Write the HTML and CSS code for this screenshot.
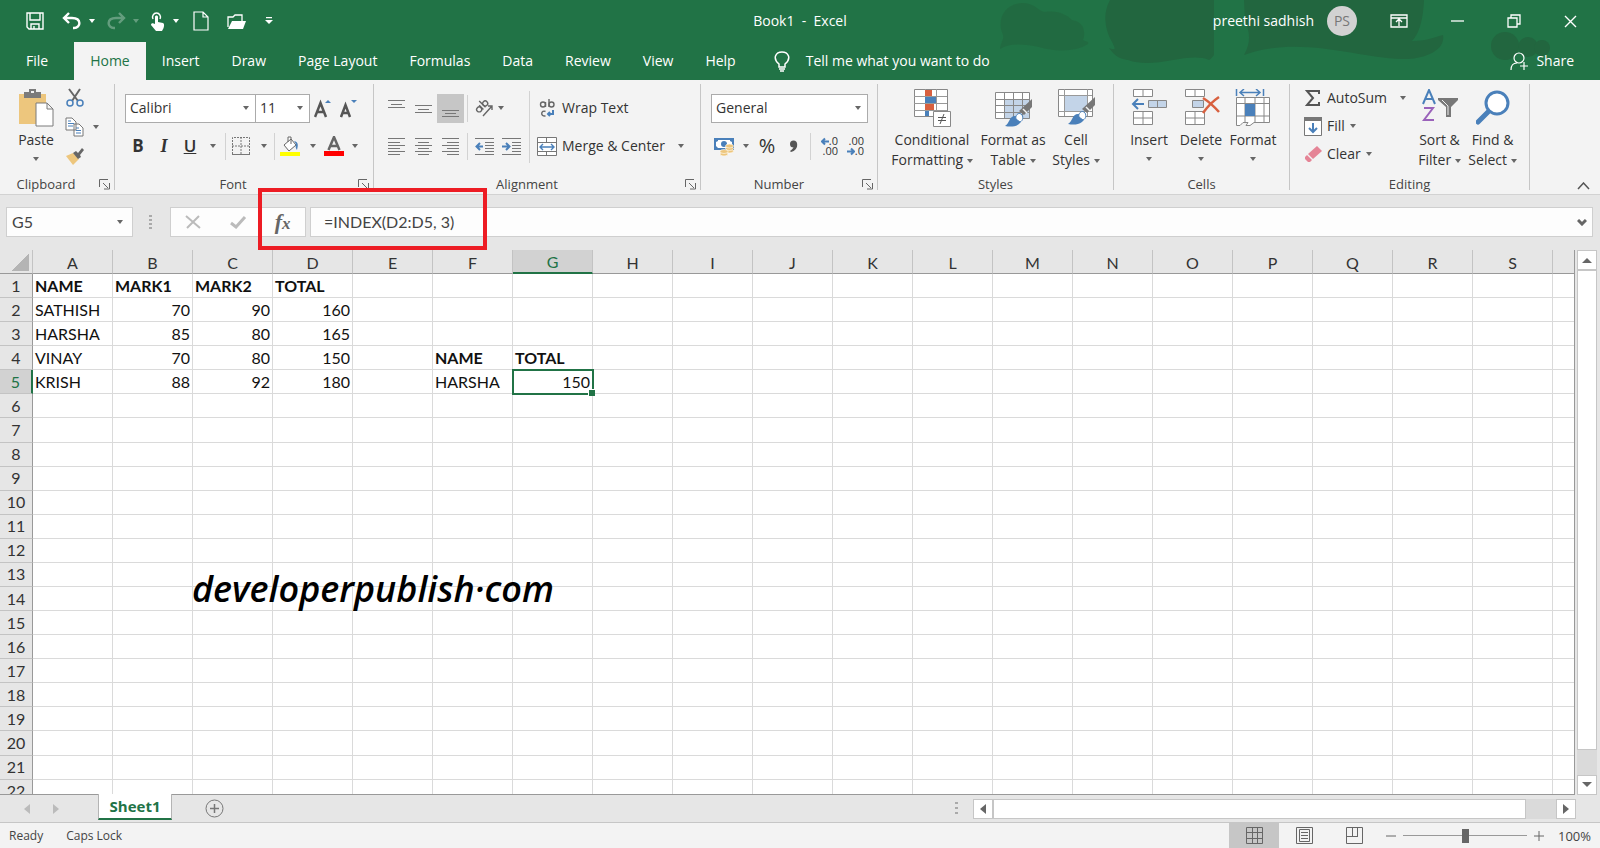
FILE: index.html
```html
<!DOCTYPE html>
<html lang="en">
<head>
<meta charset="utf-8">
<title>Book1 - Excel</title>
<link rel="stylesheet" href="styles.css">
</head>
<body>
<div class="app">
  <header class="top">
    <svg class="art" width="660" height="80" viewBox="0 0 660 80" aria-hidden="true">
      <g fill="#22663f">
        <path d="M60 49c1-8 4-9 3-14-7-16 2-32 20-32 12 0 16 9 22 9 13-2 22 3 27 8 12 2 14 12 11 20 3 2 6 1 5 4-12 8-33 8-49 3-14-3-30-4-39 2z" opacity=".7"/>
        <path d="M170 0h104v55c-2 3-5 5-5 5-20-9-54 10-81 0-12-2-14-6-19-12 8 3 6 0 3-6-8-14-9-30-2-42z"/>
        <path d="M304 0h180c-1 23-6 35-12 41 13 0 20-3 31-6 3 17-23 25-42 24-44-1-101-24-157-4 8-14 5-25 1-34z"/>
        <circle cx="565" cy="46" r="14"/><circle cx="588" cy="47" r="10"/><circle cx="602" cy="48" r="8"/>
      </g>
    </svg>
    <div class="titlebar">
      <nav class="quick" aria-label="Quick access">
        <button aria-label="Save"><svg width="18" height="18" fill="none" stroke="#fff" stroke-width="1.4"><path d="M1 1h16v16H3l-2-2zM4 1v7h10V1M5 17v-5h8v5M8 17v-3"/></svg></button>
        <button aria-label="Undo"><svg width="20" height="18" fill="none" stroke="#fff" stroke-width="2.4"><path d="M7 1L2 6l5 5M2 6h8c10 0 9 10 2 10h-1"/></svg></button><i class="caret light"></i>
        <button class="dim" aria-label="Redo"><svg width="20" height="18" fill="none" stroke="#fff" stroke-width="2.4"><path d="M13 1l5 5-5 5M18 6h-8c-10 0-9 10-2 10h1"/></svg></button><i class="caret light dim"></i>
        <button aria-label="Touch mode"><svg width="16" height="19"><path d="M3 7a4 4 0 1 1 7 0" fill="none" stroke="#fff" stroke-width="1.5"/><path d="M5 5c0-2 3-2 3 0v5l5 1c2 1 1 5-1 8H6l-5-6c0-2 2-2 4-1z" fill="#fff"/></svg></button><i class="caret light"></i>
        <button class="new" aria-label="New"><svg width="16" height="20" fill="none" stroke="#fff" stroke-width="1.2"><path d="M1 1h9l5 5v13H1zM10 1v5h5"/></svg></button>
        <button aria-label="Open"><svg width="20" height="17"><path d="M1 14V4h5l2-2h7v6" fill="none" stroke="#fff" stroke-width="1.300"/><path d="M5 8h14l-3 8H1z" fill="#fff"/></svg></button>
        <button aria-label="Customize"><svg width="8" height="8" fill="#fff"><path d="M1 0h6v1.300H1zM0 3h8L4 7z"/></svg></button>
      </nav>
      <h1 class="title">Book1&nbsp; -&nbsp; Excel</h1>
      <div class="window">
        <span>preethi sadhish</span><span class="avatar">PS</span>
        <button aria-label="Ribbon display options"><svg width="18" height="14" fill="none" stroke="#fff" stroke-width="1.3"><path d="M1 1h16v12H1zM1 4h16M9 12V6M6 8l3-3 3 3"/></svg></button>
        <button aria-label="Minimize"><svg width="13" height="14" stroke="#fff" stroke-width="1.300"><path d="M0 7h13"/></svg></button>
        <button aria-label="Restore"><svg width="14" height="14" fill="none" stroke="#fff" stroke-width="1.300"><path d="M1 4h9v9H1zM4 4V1h9v9h-3"/></svg></button>
        <button aria-label="Close"><svg width="13" height="13" stroke="#fff" stroke-width="1.4"><path d="M1 1l11 11M12 1L1 12"/></svg></button>
      </div>
    </div>
    <nav class="tabs" aria-label="Ribbon tabs">
      <button class="file">File</button><button class="active">Home</button><button>Insert</button><button>Draw</button><button>Page Layout</button><button>Formulas</button><button>Data</button><button>Review</button><button>View</button><button>Help</button>
      <button class="tell"><svg width="16" height="21" fill="none" stroke="#fff" stroke-width="1.500"><path d="M5 16v-3C-2 7 2 1 8 1s10 6 3 12v3zM5 18h6M6 20h4"/></svg>Tell me what you want to do</button>
      <button class="share"><svg width="18" height="19" fill="none" stroke="#fff" stroke-width="1.200"><circle cx="9" cy="6" r="5"/><path d="M1 18c0-5 3-7 6-7M14 10v8M10 14h8"/></svg>Share</button>
    </nav>
  </header>

  <section class="ribbon" aria-label="Home ribbon">
    <div class="group clipboard">
      <div class="body">
        <button class="big"><svg width="36" height="39"><path d="M1 5h27v30H1z" fill="#edc67d"/><path d="M6 3h5V0h7v3h5v6H6z" fill="#7b7b7b"/><path d="M13 2h3v2h-3z" fill="#f3f3f3"/><path d="M18 14h11l6 6v17H18zM29 14v6h6" fill="#fff" stroke="#7b7b7b"/></svg><span>Paste</span><i class="caret"></i></button>
        <div class="stack">
          <button aria-label="Cut"><svg width="18" height="19" fill="none" stroke-width="2"><path d="M3 1l9 12M14 1L6 13" stroke="#666"/><g stroke="#4a80ba" stroke-width="1.500"><circle cx="4" cy="15" r="3"/><circle cx="14" cy="15" r="3"/></g></svg></button>
          <button aria-label="Copy"><svg width="19" height="20" fill="#fff" stroke="#777"><path d="M1 1h6l4 4v8H1zM9 7h5l4 4v8H9z"/><path d="M3 4h3M3 6.500h6M3 9h5M11 11h3M11 13.500h5M11 16h5" stroke="#4a80ba"/></svg></button>
          <button aria-label="Format Painter"><svg width="19" height="18"><path d="M1 9l7-3 6 6-6 6z" fill="#edc67d"/><path d="M8 6l3-2 2 2 4-5 2 2-4 5 1 2-3 2z" fill="#666"/></svg></button>
        </div>
        <i class="caret"></i>
      </div>
      <footer><span>Clipboard</span><svg class="launch" width="11" height="11"><use href="#launch"/></svg></footer>
    </div>

    <div class="group font">
      <div class="body rows">
        <div class="row">
          <select class="face" aria-label="Font"><option>Calibri</option></select><select class="size" aria-label="Font size"><option>11</option></select>
          <button class="tool grow" aria-label="Increase font size"><svg width="18" height="19"><path d="M1 18L6.500 4L12 18M3 13h7" stroke="#555" stroke-width="2.500" fill="none"/><path d="M11 4h6l-3-3z" fill="#4a80ba"/></svg></button>
          <button class="tool" aria-label="Decrease font size"><svg width="18" height="19"><path d="M1 18L5.500 6L10 18M3 14h5" stroke="#555" stroke-width="2.500" fill="none"/><path d="M11 1h6l-3 3z" fill="#4a80ba"/></svg></button>
        </div>
        <div class="row">
          <button class="tool letter bold">B</button><button class="tool letter italic">I</button><button class="tool letter under">U</button><i class="caret"></i><i class="sep"></i>
          <button class="tool wide" aria-label="Borders"><svg width="18" height="18" fill="none" stroke="#777"><path d="M.5 17V.5h17V17M9 0v17M0 9h18" stroke-dasharray="2 1"/><path d="M0 17.500h18"/></svg></button><i class="caret"></i><i class="sep"></i>
          <button class="tool wide" aria-label="Fill color"><svg width="20" height="20"><path d="M4 9l7-6 5 6-7 6zM8 6V1h3v7" fill="#fff" stroke="#666"/><path d="M14 5c5 1 4 5 3 9-1-1-2-4-1-6z" fill="#4a80ba"/><path d="M0 16h20v4H0z" fill="#ff0"/></svg></button><i class="caret"></i>
          <button class="tool wide ink" aria-label="Font color"><svg width="20" height="20"><path d="M4.500 14L10 1L15.500 14M6 10h8" fill="none" stroke="#666" stroke-width="2.500"/><path d="M0 15h20v5H0z" fill="red"/></svg></button><i class="caret"></i>
        </div>
      </div>
      <footer><span>Font</span><svg class="launch" width="11" height="11"><use href="#launch"/></svg></footer>
    </div>

    <div class="group align">
      <div class="body">
        <div class="rows">
          <div class="row">
            <button class="tool" aria-label="Top align"><svg class="lines" width="17" height="19"><path d="M0 1.500h17M3 5.500h11M0 8.500h17"/></svg></button>
            <button class="tool" aria-label="Middle align"><svg class="lines" width="17" height="19"><path d="M0 6.500h17M3 10.500h11M0 13.500h17"/></svg></button>
            <button class="tool on" aria-label="Bottom align"><svg class="lines" width="17" height="19"><path d="M0 11.500h17M3 14.500h11M0 17.500h17"/></svg></button>
            <i class="sep"></i>
            <button class="tool" aria-label="Orientation"><svg width="19" height="18" fill="none" stroke="#666" stroke-width="1.400"><g transform="rotate(-45 7 9)"><circle cx="4" cy="8" r="2.500"/><path d="M7 5v6M10 2v9"/><circle cx="12.500" cy="8" r="2.500"/></g><path d="M8 17L17 7M13 7h4v4"/></svg></button><i class="caret"></i>
          </div>
          <div class="row">
            <button class="tool" aria-label="Align left"><svg class="lines" width="17" height="19"><path d="M0 1.500h17M0 5.500h12M0 8.500h17M0 11.500h12M0 14.500h17M0 17.500h12"/></svg></button>
            <button class="tool" aria-label="Center"><svg class="lines" width="17" height="19"><path d="M0 1.500h17M3 5.500h11M0 8.500h17M3 11.500h11M0 14.500h17M3 17.500h11"/></svg></button>
            <button class="tool" aria-label="Align right"><svg class="lines" width="17" height="19"><path d="M0 1.500h17M5 5.500h12M0 8.500h17M5 11.500h12M0 14.500h17M5 17.500h12"/></svg></button>
            <i class="sep"></i>
            <button class="tool" aria-label="Decrease indent"><svg class="lines" width="19" height="19"><path d="M0 1.500h19M10 5.500h9M10 8.500h9M10 11.500h9M10 14.500h9M0 17.500h19"/><path class="blue" d="M8 9.500H1M5 6L1.500 9.500 5 13"/></svg></button>
            <button class="tool" aria-label="Increase indent"><svg class="lines" width="19" height="19"><path d="M0 1.500h19M10 5.500h9M10 8.500h9M10 11.500h9M10 14.500h9M0 17.500h19"/><path class="blue" d="M0 9.500h7M4 6l3.500 3.500L4 13"/></svg></button>
          </div>
        </div>
        <i class="sep tall"></i>
        <div class="rows">
          <button class="label row"><svg width="20" height="19" fill="none" stroke="#666" stroke-width="1.400"><circle cx="6" cy="5.500" r="2.500"/><path d="M8.500 3v5M12 0v8M8.500 12.500c-4-2-6 5-0 4.500"/><circle cx="14.500" cy="5.500" r="2.500"/><path class="blue" d="M16 11v4h-5M13 13l-2 2 2 2"/></svg>Wrap Text</button>
          <button class="label row"><svg width="20" height="19" fill="#fff" stroke="#777"><path d="M.5.500h19v18H.5zM.5 5.500h19M.5 14.500h19M9.500.500v5M9.500 14.500v4"/><path d="M3 10h14M6 7l-3 3 3 3M14 7l3 3-3 3" fill="none" stroke="#4a80ba" stroke-width="1.400"/></svg>Merge &amp; Center<i class="caret"></i></button>
        </div>
      </div>
      <footer><span>Alignment</span><svg class="launch" width="11" height="11"><use href="#launch"/></svg></footer>
    </div>

    <div class="group number">
      <div class="body rows">
        <div class="row"><select class="format" aria-label="Number format"><option>General</option></select></div>
        <div class="row">
          <button class="tool" aria-label="Accounting format"><svg width="20" height="19"><path d="M0 1h20v12H0z" fill="#4a80ba"/><path d="M4 3h12v1l2 1v4l-2 2H4L2 9V5l2-1z" fill="#fff"/><circle cx="10" cy="7" r="3" fill="#4a80ba"/><g fill="#edc67d" stroke="#fff" stroke-width=".6"><ellipse cx="15.500" cy="14" rx="4" ry="2"/><ellipse cx="15.500" cy="11.500" rx="4" ry="2"/><ellipse cx="15.500" cy="9" rx="4" ry="2"/><ellipse cx="10" cy="17" rx="4" ry="2"/><ellipse cx="10" cy="14.500" rx="4" ry="2"/></g></svg></button><i class="caret"></i>
          <button class="tool percent">%</button>
          <button class="tool" aria-label="Comma style"><svg width="9" height="13"><circle cx="4.500" cy="4" r="3.500" fill="#555"/><path d="M8 3c1 5-2 8-6 9l-1-1c3-2 4-4 4-6z" fill="#555"/></svg></button>
          <i class="sep"></i>
          <button class="tool dec" aria-label="Increase decimal"><span><svg width="8" height="9"><path class="blue" d="M8 4.500H1M4 1.500L1 4.500l3 3"/></svg>.0</span><span>.00</span></button>
          <button class="tool dec" aria-label="Decrease decimal"><span>.00</span><span><svg width="8" height="9"><path class="blue" d="M0 4.500h7M4 1.500l3 3-3 3"/></svg>.0</span></button>
        </div>
      </div>
      <footer><span>Number</span><svg class="launch" width="11" height="11"><use href="#launch"/></svg></footer>
    </div>

    <div class="group styles">
      <div class="body">
        <button class="big"><svg width="37" height="39"><path d="M.5.500h33v27H.5z" fill="#fff" stroke="#888"/><path d="M11.500 0v27M22.500 0v27M0 7.500h33M0 14.500h33M0 21.500h33" stroke="#999"/><path d="M11 1h7v6h-7zM11 15h9v6h-9z" fill="#d8603f"/><path d="M11 8h11v6H11zM11 22h4v5h-4z" fill="#4a80ba"/><path d="M19.500 22.500h17v15h-17z" fill="#fff" stroke="#888"/><path d="M24 28.500h8M24 31.500h8M30 25l-4 10" stroke="#555"/></svg><span>Conditional<br>Formatting <i class="caret"></i></span></button>
        <button class="big"><svg width="37" height="39"><path d="M.5 3.500h34v26H.5z" fill="#fff"/><path d="M9 10h26v20H9z" fill="#c3d4e8"/><path d="M.5 3.500h34v26H.5zM9.500 3v26M18.500 3v26M27.500 3v26M0 10.500h34M0 16.500h34M0 23.500h34" fill="none" stroke="#888"/><use href="#brush"/></svg><span>Format as<br>Table <i class="caret"></i></span></button>
        <button class="big"><svg width="37" height="39"><path d="M.5.500h34v27H.5z" fill="#fff" stroke="#888"/><path d="M7 7h22v15H7z" fill="#c3d4e8"/><path d="M6.500 0v27M29.500 0v27M0 6.500h34M0 22.500h34" stroke="#999"/><use href="#brush" y="-2"/></svg><span>Cell<br>Styles <i class="caret"></i></span></button>
      </div>
      <footer><span>Styles</span></footer>
    </div>

    <div class="group cells">
      <div class="body">
        <button class="big"><svg width="37" height="39" fill="#fff" stroke="#888"><path d="M2.500.500h19v7h-19zM12 0v7M2.500 22.500h19v13h-19zM12 22v13M2 29h19"/><path d="M17.500 11.500h18v7h-18zM26.500 11v8" fill="#c3d4e8"/><path class="blue" d="M13 15H2M7 10l-5 5 5 5"/></svg><span>Insert</span><i class="caret"></i></button>
        <button class="big"><svg width="37" height="39" fill="#fff" stroke="#888"><path d="M2.500.500h19v7h-19zM12 0v7M2.500 22.500h19v13h-19zM12 22v13M2 29h19"/><path d="M9.500 11.500h11v7h-11z" fill="#c3d4e8"/><path d="M20 9q8 5 16 14M36 8q-9 6-16 16" fill="none" stroke="#d8603f" stroke-width="2.500"/></svg><span>Delete</span><i class="caret"></i></button>
        <button class="big"><svg width="37" height="39" fill="#fff" stroke="#888"><path d="M1.500 8.500h33v25H19l-4 3h-4l2-3H8l-3 3H1.500zM10 8v25M20 8v25M29 8v25M1 14.500h33M1 27h33"/><path d="M10 15h10v12H10z" fill="#4a80ba" stroke="none"/><path d="M1.500 0v7M28.500 0v7M5 3.500h20M9 0L5 3.500 9 7M21 0l4 3.500L21 7" fill="none" stroke="#4a80ba" stroke-width="1.500"/></svg><span>Format</span><i class="caret"></i></button>
      </div>
      <footer><span>Cells</span></footer>
    </div>

    <div class="group editing">
      <div class="body">
        <div class="edits">
          <button class="label"><svg width="18" height="18"><path d="M15 5V2H3l6 7-6 7h12v-3" fill="none" stroke="#555" stroke-width="2"/></svg>AutoSum<i class="caret far"></i></button>
          <button class="label"><svg width="18" height="19"><path d="M.5 1.500h17v17H.5z" fill="#fff" stroke="#777"/><path d="M0 0h18v4H0z" fill="#777"/><path class="blue" d="M9 6v9M5 11l4 4 4-4"/></svg>Fill<i class="caret"></i></button>
          <button class="label"><svg width="18" height="17"><path d="M13 0l5 5-9 8-5-5z" fill="#e58496"/><path d="M3 9l5 5-2 2H4l-3-3v-2z" fill="#e58496"/></svg>Clear<i class="caret"></i></button>
        </div>
        <button class="big"><svg width="36" height="38"><path d="M1 15L7 1L13 15M3 10h8" fill="none" stroke="#4a80ba" stroke-width="2"/><path d="M2 19h9L2 31h10" fill="none" stroke="#9a62ba" stroke-width="2"/><path d="M16 9h20v2l-7 7v10h-5V18l-8-7z" fill="#777"/><path d="M20 11l6 6v9" fill="none" stroke="#eee"/></svg><span>Sort &amp;<br>Filter <i class="caret"></i></span></button>
        <button class="big"><svg width="34" height="38"><path d="M2 33L13 22" stroke="#4a80ba" stroke-width="5" stroke-linecap="round"/><circle cx="21" cy="14" r="11" fill="#fff" stroke="#4a80ba" stroke-width="3"/></svg><span>Find &amp;<br>Select <i class="caret"></i></span></button>
      </div>
      <footer><span>Editing</span></footer>
    </div>
    <button class="collapse" aria-label="Collapse ribbon"><svg width="13" height="8" fill="none" stroke="#555" stroke-width="1.500"><path d="M1 7l5.500-6L12 7"/></svg></button>
  </section>

  <section class="formula" aria-label="Formula bar">
    <label class="namebox"><input aria-label="Name box" value="G5"><i class="caret"></i></label>
    <svg class="dots" width="3" height="14" fill="#aaa"><path d="M0 0h3v2H0zM0 4h3v2H0zM0 8h3v2H0zM0 12h3v2H0z"/></svg>
    <div class="entry">
      <button aria-label="Cancel"><svg width="16" height="14" stroke="#bbb" stroke-width="2"><path d="M1 1l14 12M14 1L2 13"/></svg></button>
      <button aria-label="Enter"><svg width="17" height="13" fill="none" stroke="#bbb" stroke-width="3"><path d="M1 7l5 4L15 1"/></svg></button>
      <button class="fx" aria-label="Insert function">f<sub>x</sub></button>
    </div>
    <label class="fbox"><input aria-label="Formula" value="=INDEX(D2:D5, 3)"><svg width="10" height="7" fill="none" stroke="#666" stroke-width="3"><path d="M1 1l4 4 4-4"/></svg></label>
    <div class="callout"></div>
  </section>

  <main class="work">
    <div class="gridbox">
      <table class="grid"><thead id="head"></thead><tbody id="rows"></tbody></table>
      <p class="mark">developerpublish·com</p>
    </div>
    <div class="vscroll">
      <button aria-label="Scroll up"><svg width="10" height="6" fill="#666"><path d="M0 6l5-5 5 5z"/></svg></button>
      <div class="thumb"></div>
      <div class="track"></div>
      <button aria-label="Scroll down"><svg width="10" height="6" fill="#666"><path d="M0 0l5 5 5-5z"/></svg></button>
    </div>
  </main>

  <div class="sheets">
    <button class="nav" aria-label="Previous sheet"><svg width="6" height="10" fill="#bbb"><path d="M6 0L0 5l6 5z"/></svg></button>
    <button class="nav" aria-label="Next sheet"><svg width="6" height="10" fill="#bbb"><path d="M0 0l6 5-6 5z"/></svg></button>
    <button class="sheet">Sheet1</button>
    <button class="add" aria-label="New sheet"><svg width="19" height="19" fill="none" stroke="#777"><circle cx="9.500" cy="9.500" r="8.500"/><path d="M9.500 5v9M5 9.500h9" stroke-width="1.500"/></svg></button>
    <svg class="dots" width="3" height="14" fill="#aaa"><path d="M0 0h3v2H0zM0 5h3v2H0zM0 10h3v2H0z"/></svg>
    <div class="hscroll">
      <button aria-label="Scroll left"><svg width="6" height="10" fill="#666"><path d="M6 0L0 5l6 5z"/></svg></button>
      <div class="thumb"></div>
      <div class="track"></div>
      <button aria-label="Scroll right"><svg width="6" height="10" fill="#666"><path d="M0 0l6 5-6 5z"/></svg></button>
    </div>
  </div>

  <footer class="status">
    <span>Ready</span><span>Caps Lock</span>
    <div class="views">
      <button class="on" aria-label="Normal view"><svg width="17" height="17"><path d="M.5.500h16v16H.5zM6.500 0v16M11.500 0v16M0 5.500h16M0 11.500h16"/></svg></button>
      <button aria-label="Page layout view"><svg width="17" height="17"><path d="M.5.500h16v16H.5zM3.500 2.500h10v12h-10zM5 5.500h7M5 8.500h7M5 11.500h7"/></svg></button>
      <button aria-label="Page break view"><svg width="17" height="17"><path d="M.5.500h16v16H.5zM6.500 0v9M11.500 0v9M0 9.500h12"/></svg></button>
    </div>
    <button class="zoom" aria-label="Zoom out"><svg width="10" height="10"><path d="M0 5h10"/></svg></button>
    <input type="range" min="10" max="190" value="100" aria-label="Zoom">
    <button class="zoom" aria-label="Zoom in"><svg width="10" height="10"><path d="M0 5h10M5 0v10"/></svg></button>
    <output>100%</output>
  </footer>
</div>

<svg class="defs" aria-hidden="true">
  <defs>
    <g id="launch" fill="none" stroke="#666"><path d="M.5 8V.500H9M4 4l5 5M10.500 4v6H5"/></g>
    <g id="brush" stroke="none"><path d="M37 10v8l-8 8-5-4z" fill="#777"/><path d="M28 20l4 4" stroke="#f3f3f3" stroke-width="1.500"/><path d="M10 37c5-3 4-10 10-10s8 5 4 8-9 3-14 2z" fill="#4a80ba"/><path d="M21 30c-1-3 2-7 5-5s2 7-1 8z" fill="#fff" stroke="#4a80ba"/></g>
  </defs>
</svg>
<script src="grid.js"></script>
</body>
</html>
```

FILE: styles.css
```css
* { box-sizing: border-box; }
body { margin: 0; font: 14px/20px "Open Sans", "Noto Sans", sans-serif; color: #333; background: #e6e6e6; }
button { font: inherit; color: inherit; background: none; border: 0; padding: 0; display: flex; align-items: center; justify-content: center; }
svg { display: block; flex: none; }
h1, p { margin: 0; }
.defs { position: absolute; width: 0; height: 0; }
.app { height: 100vh; display: flex; flex-direction: column; overflow: hidden; }
.caret { display: inline-block; flex: none; width: 0; height: 0; border: 3px solid transparent; border-top: 4px solid #666; border-bottom: 0; vertical-align: middle; }
.caret.light { border-top-color: #fff; }
.dim { opacity: .3; }
.blue { fill: none; stroke: #4a80ba; stroke-width: 2; }

.top { position: relative; background: #217346; color: #fff; }
.art { position: absolute; right: 0; top: 0; }
.titlebar { position: relative; height: 42px; display: grid; grid-template-columns: 1fr auto 1fr; align-items: center; }
.quick { display: flex; align-items: center; padding-left: 26px; }
.quick button { margin-right: 18px; }
.quick .new { margin-left: 3px; }
.quick button:has(+ .caret) { margin-right: 7px; }
.quick .caret { margin-right: 11px; }
.title { font-size: 14px; font-weight: 400; }
.window { display: flex; align-items: center; justify-content: flex-end; gap: 43px; padding-right: 23px; }
.avatar { width: 30px; height: 30px; border-radius: 50%; background: #d2d2d2; color: #777; text-align: center; line-height: 30px; margin-left: -30px; margin-right: -10px; }
.tabs { position: relative; display: flex; height: 38px; }
.tabs button { padding: 0 16px; }
.tabs .file { padding: 0 26px; }
.tabs .active { background: #f3f3f3; color: #217346; }
.tabs .tell { gap: 16px; padding-left: 22px; }
.tabs .share { margin-left: auto; gap: 8px; padding-right: 26px; }

.ribbon { position: relative; display: flex; height: 115px; padding: 4px 0; background: #f3f3f3; border-bottom: 1px solid #d2d2d2; }
.group { display: flex; flex-direction: column; border-right: 1px solid #c6c6c6; }
.group footer { position: relative; text-align: center; font-size: 13px; line-height: 12px; color: #444; margin-top: auto; }
.launch { position: absolute; right: 4px; bottom: 0; }
.body { display: flex; }
.rows { display: flex; flex-direction: column; gap: 8px; padding-top: 9px; }
.row { display: flex; align-items: center; height: 30px; }
.tool { width: 27px; height: 29px; }
.tool.on { background: #c6c6c6; }
.sep { width: 1px; height: 27px; background: #d2d2d2; margin: 0 3px; }
.sep.tall { height: 72px; margin: 7px 3px 0 0; }
.lines { fill: none; stroke: #777; }
.lines .blue { stroke: #4a80ba; }
.label { gap: 5px; justify-content: flex-start; }
.big { display: flex; flex-direction: column; justify-content: flex-start; text-align: center; padding-top: 5px; height: 88px; }
.big > svg { margin-bottom: 2px; height: 39px; }
.big > .caret { margin-top: 7px; }

.clipboard { width: 115px; }
.clipboard .big { width: 72px; }
.clipboard footer { padding-right: 22px; }
.stack { display: flex; flex-direction: column; gap: 10px; padding: 4px 0 0; width: 19px; margin-left: -7px; }
.body > .caret { margin: 41px 0 0 9px; }
.font { width: 259px; }
.font .rows { padding-left: 10px; }
.font footer { padding-right: 22px; }
select { font: inherit; color: #333; height: 29px; border: 1px solid #ababab; padding: 0 4px; margin: 0; border-radius: 0; appearance: none; background: #fff url("data:image/svg+xml,%3Csvg xmlns='http://www.w3.org/2000/svg' width='6' height='4'%3E%3Cpath d='M0 0h6L3 4z' fill='%23666'/%3E%3C/svg%3E") no-repeat right 6px center; }
.face { width: 131px; }
.size { width: 55px; margin-left: -1px; }
.font .tool { width: 26px; }
.letter { font-size: 17px; }
.bold { font-weight: 700; }
.italic { font: italic bold 18px "Liberation Serif", serif; }
.under { font-weight: 600; text-decoration: underline; }
.font .row .caret { margin: 0 8px; }
.font .row .letter + .caret { margin-left: 7px; }
.font .row .sep { margin: 0 0 0 1px; }
.font .row .wide { width: 24px; }
.font .row .wide + .caret { margin-right: 6px; }
.font .row .sep + .wide { width: 30px; }
.font .row .sep + .wide + .caret { margin-left: 5px; }
.font .row .ink + .caret { margin-left: 6px; }
.align { width: 327px; }
.align .rows:first-child { padding-left: 9px; width: 155px; }
.align .rows:last-child .label .caret { margin-left: 8px; }
.align .label { padding-left: 4px; }
.align footer { padding-right: 20px; }
.number { width: 177px; }
.number .rows { padding-left: 10px; }
.format { width: 157px; }
.number .caret { margin: 0 5px 0 6px; }
.percent { font-size: 20px; }
.number .tool { width: 26px; }
.number .sep { margin: 0 8px 0 4px; }
.number .dec { width: 19px; margin-right: 7px; flex-direction: column; align-items: flex-end; font-size: 11px; line-height: 10px; }
.dec span { display: flex; align-items: center; }
.number footer { padding-right: 20px; }
.styles { width: 236px; }
.styles .body { padding-left: 9px; }
.styles .big:nth-child(1) { width: 90px; }
.styles .big:nth-child(2) { width: 72px; }
.styles .big:nth-child(3) { width: 54px; }
.cells { width: 176px; }
.cells .body { padding-left: 9px; }
.cells .big { width: 52px; }
.editing { width: 240px; }
.edits { width: 116px; padding: 4px 0 0 14px; display: flex; flex-direction: column; gap: 8px; }
.edits .label .far { margin-left: 8px; }
.editing .big { width: 53px; }
.editing .edits + .big { margin-left: 7px; }
.collapse { margin: auto 10px 0 auto; }

.formula { position: relative; display: flex; height: 55px; padding: 12px 7px 0 6px; }
.namebox, .entry, .fbox { display: flex; align-items: center; height: 30px; background: #fdfdfd; border: 1px solid #cfcfcf; }
.formula input { flex: 1; min-width: 0; border: 0; padding: 0; background: none; font: 16px/20px Lato, "Open Sans", sans-serif; color: #444; }
.namebox { width: 127px; padding: 0 9px 0 5px; }
.formula .dots { margin: 8px 18px 0 16px; }
.entry { width: 136px; margin-right: 4px; }
.entry button { width: 45px; }
.entry .fx { display: block; font: italic bold 22px/26px "Liberation Serif", serif; color: #666; }
.fx sub { font-size: 17px; line-height: 12px; vertical-align: baseline; }
.fbox { flex: 1; padding: 0 5px 0 13px; }
.callout { position: absolute; left: 258px; top: -7px; width: 229px; height: 62px; border: 4px solid #ed1c24; z-index: 2; }

.work { flex: 1; min-height: 0; display: flex; gap: 2px; padding-right: 3px; }
.gridbox { position: relative; flex: 1; min-width: 0; overflow: hidden; border-right: 1px solid #999; border-bottom: 1px solid #999; }
.grid { width: 1633px; height: calc(100% + 10px); table-layout: fixed; border-collapse: separate; border-spacing: 0; font: 16px/20px Lato, "Open Sans", sans-serif; color: #111; background: #fff; }
.grid th, .grid td { padding: 0 2px; height: 24px; border-right: 1px solid #dadada; border-bottom: 1px solid #dadada; white-space: nowrap; }
.grid th { font-weight: 400; background: #e6e6e6; text-align: center; color: #333; border-color: #c3c3c3; }
.grid thead th { padding-top: 2px; border-bottom-color: #999; height: 23px; }
.grid tbody th { border-right-color: #999; }
.grid .corner { width: 33px; background: linear-gradient(135deg, transparent 50%, #b4b4b4 50%) no-repeat 12px 4px / 17px 17px #e6e6e6; }
.grid .picked { background: #d2d2d2; color: #217346; }
.grid thead .picked { border-bottom: 2px solid #217346; }
.grid tbody .picked { border-right: 2px solid #217346; }
.grid td.num { text-align: right; }
.grid td.strong { font-weight: 700; }
.grid td.cursor { position: relative; outline: 2px solid #217346; outline-offset: -1px; }
.cursor::after { content: ""; position: absolute; right: -3px; bottom: -3px; width: 6px; height: 6px; background: #217346; border: 1px solid #fff; border-width: 1px 0 0 1px; }
.mark { position: absolute; left: 192px; top: 316px; font: italic 600 36px/46px "Open Sans", sans-serif; color: #000; }
.vscroll { width: 20px; display: flex; flex-direction: column; }
.vscroll button, .hscroll button { flex: none; width: 20px; height: 20px; background: #fff; border: 1px solid #c6c6c6; }
.thumb { background: #fff; border: 1px solid #c6c6c6; }
.track { background: #dadada; }
.vscroll .thumb { flex: 1; }
.vscroll .track { height: 25px; }

.sheets { display: flex; align-items: center; height: 27px; padding-right: 24px; }
.nav { width: 29px; }
.nav:first-child { margin-left: 12px; }
.sheet { height: 26px; width: 74px; margin-left: 28px; align-self: flex-start; margin-top: -1px; z-index: 1; background: #fff; color: #217346; font-size: 15px; font-weight: 700; border: 1px solid #b4b4b4; border-width: 0 1px 2px; border-bottom-color: #217346; }
.add { margin-left: 33px; }
.sheets .dots { margin-left: auto; }
.hscroll { display: flex; width: 603px; margin-left: 15px; }
.hscroll .thumb { flex: 1; }
.hscroll .track { width: 30px; }

.status { display: flex; align-items: center; height: 26px; padding: 0 9px; background: #f3f3f3; border-top: 1px solid #c6c6c6; font-size: 12px; color: #444; }
.status span { margin-right: 23px; }
.status svg { fill: none; stroke: #666; }
.views { display: flex; margin-left: auto; align-self: stretch; }
.views button { width: 50px; }
.views .on { background: #c6c6c6; }
.zoom { width: 24px; }
.status input { appearance: none; width: 124px; height: 16px; margin: 0; background: linear-gradient(#999, #999) no-repeat center / 100% 1px; }
.status input::-webkit-slider-thumb { appearance: none; width: 7px; height: 14px; background: #666; }
.status output { width: 40px; text-align: right; font-size: 13px; }
```

FILE: grid.js
```js
const columns = "ABCDEFGHIJKLMNOPQRST".split("");
const cells = {
  A1: "NAME", B1: "MARK1", C1: "MARK2", D1: "TOTAL",
  A2: "SATHISH", B2: 70, C2: 90, D2: 160,
  A3: "HARSHA", B3: 85, C3: 80, D3: 165,
  A4: "VINAY", B4: 70, C4: 80, D4: 150, F4: "NAME", G4: "TOTAL",
  A5: "KRISH", B5: 88, C5: 92, D5: 180, F5: "HARSHA", G5: 150
};
const bold = ["A1", "B1", "C1", "D1", "F4", "G4"];

const head = document.getElementById("head").insertRow();
head.innerHTML = '<th class="corner"></th>' + columns.map(c =>
  `<th scope="col"${c === "G" ? ' class="picked"' : ""}>${c === "T" ? "" : c}</th>`).join("");

const body = document.getElementById("rows");
for (let r = 1; r <= 22; r++) {
  const row = body.insertRow();
  row.innerHTML = `<th scope="row"${r === 5 ? ' class="picked"' : ""}>${r}</th>`;
  for (const c of columns) {
    const key = c + r;
    const cell = row.insertCell();
    if (key in cells) cell.textContent = cells[key];
    if (typeof cells[key] === "number") cell.classList.add("num");
    if (bold.includes(key)) cell.classList.add("strong");
    if (key === "G5") cell.classList.add("cursor");
  }
}
```
